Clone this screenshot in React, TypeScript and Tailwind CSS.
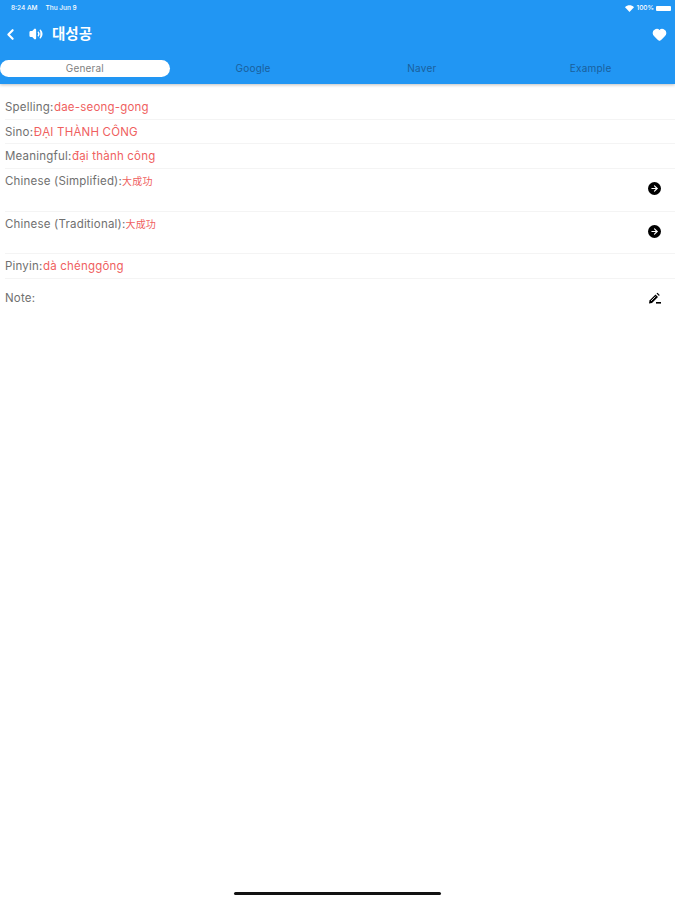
import { ChevronLeft, Heart, Volume2, ArrowRight } from 'lucide-react'

const tabs = ['General', 'Google', 'Naver', 'Example']

function Row({ label, value, arrow, cjk, height }: { label: string; value: string; arrow?: boolean; cjk?: boolean; height: string }) {
  return (
    <div className={`relative flex border-b border-[#f4f4f4] ml-[5px] ${height} ${arrow ? 'pt-[4px]' : 'items-center pt-[1px]'}`}>
      <span className="text-[11.5px] leading-[16px] tracking-[0.2px] text-[#707070]">
        {label}:
        <span className={`text-[#ef5f5f] ${cjk ? 'text-[10px]' : 'ml-[0.5px]'}`}>{value}</span>
      </span>
      {arrow && (
        <span className="absolute right-[14px] top-[13.5px] flex h-[13px] w-[13px] items-center justify-center rounded-full bg-black">
          <ArrowRight size={9} strokeWidth={3} className="text-white" />
        </span>
      )}
    </div>
  )
}

export default function App() {
  return (
    <div className="flex min-h-[900px] flex-col bg-white font-['Inter','Noto_Sans_CJK_KR',sans-serif]">
      <div className="h-[84px] bg-[#2196f3] shadow-[0_1px_3px_rgba(0,0,0,0.25)]">
        <div className="flex h-[16px] items-center justify-between pt-[1px] pl-[11px] pr-[4px] text-[6.5px] font-medium text-white">
          <div className="flex gap-[8px]">
            <span>8:24 AM</span>
            <span>Thu Jun 9</span>
          </div>
          <div className="flex items-center gap-[2px]">
            <svg width="9" height="7" viewBox="0 0 9 7">
              <path d="M0 2.2 C2.5 -0.4 6.5 -0.4 9 2.2 L4.5 7 Z" fill="white" />
            </svg>
            <span>100%</span>
            <span className="h-[5px] w-[15px] rounded-[1px] bg-white" />
          </div>
        </div>
        <div className="flex h-[36px] items-center pl-[2px] pr-[8px] text-white">
          <ChevronLeft size={17} strokeWidth={3} />
          <Volume2 size={14} strokeWidth={2.5} fill="white" className="ml-[10px]" />
          <span className="ml-[9px] text-[14.5px] font-semibold">대성공</span>
          <Heart size={15} fill="white" className="ml-auto" />
        </div>
        <div className="mt-[8px] grid grid-cols-4">
          {tabs.map((tab, i) => (
            <div
              key={tab}
              className={`flex h-[17px] items-center justify-center rounded-full text-[10px] tracking-[0.2px] ${
                i === 0 ? 'mr-[-1px] bg-white text-[#808080]' : 'text-[#1a5f9c]'
              }`}
            >
              {tab}
            </div>
          ))}
        </div>
      </div>
      <div className="mt-[11px]">
        <Row label="Spelling" value="dae-seong-gong" height="h-[24.5px]" />
        <Row label="Sino" value="ĐẠI THÀNH CÔNG" height="h-[24.5px]" />
        <Row label="Meaningful" value="đại thành công" height="h-[24.5px]" />
        <Row label="Chinese (Simplified)" value="大成功" arrow cjk height="h-[43px]" />
        <Row label="Chinese (Traditional)" value="大成功" arrow cjk height="h-[42px]" />
        <Row label="Pinyin" value="dà chénggōng" height="h-[25px]" />
        <div className="ml-[5px] flex h-[40px] items-center justify-between pr-[14px]">
          <span className="pt-[1px] text-[11.5px] tracking-[0.2px] text-[#707070]">Note:</span>
          <svg width="13" height="13" viewBox="0 0 13 13">
            <path d="M1 11.5 L1.5 8.5 L7.5 2.5 L10 5 L4 11 Z" fill="black" />
            <path d="M3 9 L7.5 4.5" stroke="white" strokeWidth="0.8" />
            <path d="M8.5 1.5 L9.5 .8 L11.7 3 L11 4 Z" fill="black" />
            <rect x="8" y="10" width="5" height="1.6" fill="black" />
          </svg>
        </div>
      </div>
      <div className="mt-auto mb-[5px] mx-auto h-[3px] w-[207px] rounded-full bg-[#111]" />
    </div>
  )
}
